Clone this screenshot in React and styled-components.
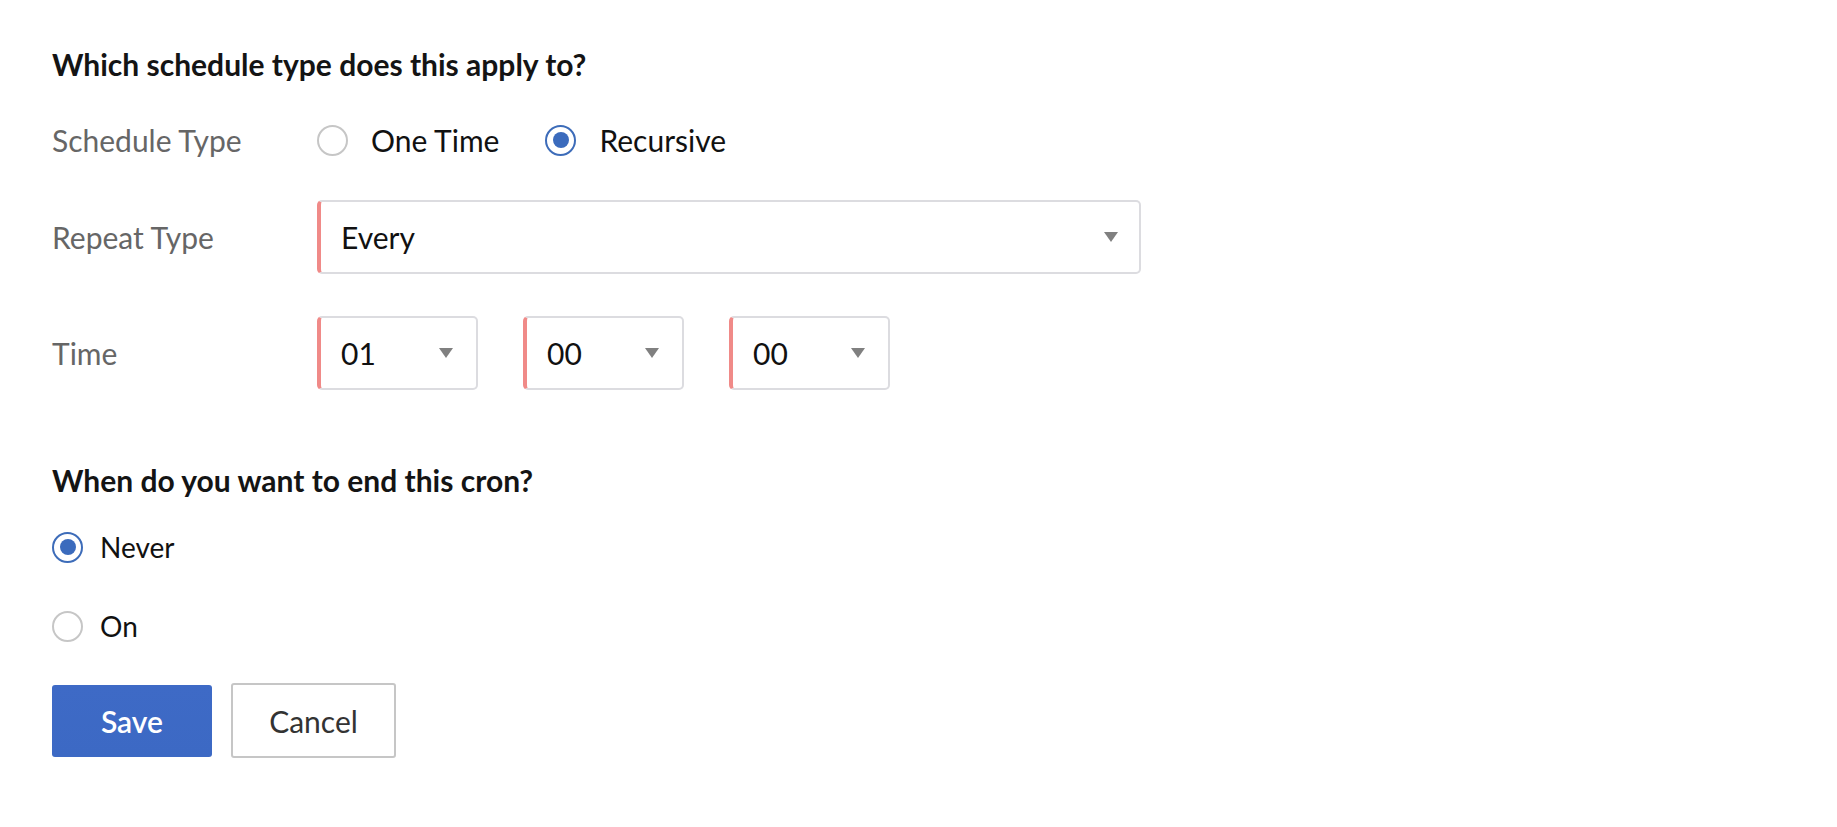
import { useState } from "react";
import styled, { createGlobalStyle } from "styled-components";

const GlobalStyle = createGlobalStyle`
  body {
    margin: 0;
    background: #fff;
    font-family: Lato, "Open Sans", sans-serif;
  }
`;

const Form = styled("div")`
  padding: 47px 52px 60px;
  color: #111;
`;

const Heading = styled("h2")`
  margin: ${(p) => p.$top || 0}px 0 0;
  font-size: 30px;
  line-height: 34px;
  font-weight: 700;
  color: #141414;
`;

const Row = styled("div")`
  display: grid;
  grid-template-columns: 265px auto;
  align-items: center;
  min-height: 40px;
  margin-top: ${(p) => p.$top}px;
`;

const Label = styled("span")`
  font-size: 30px;
  color: #666;
`;

const Options = styled("div")`
  display: flex;
  align-items: center;
  gap: ${(p) => p.$gap || 46}px;
`;

const Option = styled("label")`
  display: flex;
  align-items: center;
  gap: ${(p) => p.$gap || 23}px;
  font-size: ${(p) => p.$size || 30}px;
  color: #111;
  cursor: pointer;
  min-height: 40px;
  margin-top: ${(p) => p.$top || 0}px;
`;

const Circle = styled("span")`
  box-sizing: border-box;
  width: 31px;
  height: 31px;
  border-radius: 50%;
  border: 2px solid ${(p) => (p.$on ? "#3d6cb9" : "#c6c6c6")};
  display: flex;
  align-items: center;
  justify-content: center;
  flex-shrink: 0;

  &::after {
    content: "";
    width: 16px;
    height: 16px;
    border-radius: 50%;
    background: #3b6bbd;
    display: ${(p) => (p.$on ? "block" : "none")};
  }
`;

const Select = styled("div")`
  box-sizing: border-box;
  width: ${(p) => p.$width}px;
  height: 74px;
  border: 2px solid #dcdce0;
  border-left: 4px solid #f08a88;
  border-radius: 5px;
  display: flex;
  align-items: center;
  justify-content: space-between;
  padding: 0 ${(p) => p.$right}px 0 20px;
  font-size: 30px;
  color: #111;
  background: #fff;
`;

const Caret = styled("span")`
  width: 0;
  height: 0;
  border-left: 7.5px solid transparent;
  border-right: 7.5px solid transparent;
  border-top: 10px solid #808080;
`;

const TimeGroup = styled("div")`
  display: flex;
  gap: 45px;
`;

const Actions = styled("div")`
  display: flex;
  align-items: center;
  gap: 19px;
  margin-top: 37px;
`;

const Button = styled("button")`
  box-sizing: border-box;
  font-family: Lato, "Open Sans", sans-serif;
  font-size: 30px;
  border-radius: 3px;
  cursor: pointer;
  width: ${(p) => (p.$primary ? 160 : 165)}px;
  height: ${(p) => (p.$primary ? 72 : 75)}px;
  border: ${(p) => (p.$primary ? "none" : "2px solid #c6c6c6")};
  background: ${(p) => (p.$primary ? "linear-gradient(#3e6ac6, #3c69c4)" : "#fff")};
  color: ${(p) => (p.$primary ? "#fff" : "#333")};
  font-weight: ${(p) => (p.$primary ? 600 : 400)};
`;

const Radio = ({ on, children, gap, top, size, onClick }) => (
  <Option $gap={gap} $top={top} $size={size} onClick={onClick}>
    <Circle $on={on} />
    {children}
  </Option>
);

const App = () => {
  const [type, setType] = useState("recursive");
  const [end, setEnd] = useState("never");

  return (
    <Form>
      <GlobalStyle />
      <Heading>Which schedule type does this apply to?</Heading>

      <Row $top={39}>
        <Label>Schedule Type</Label>
        <Options>
          <Radio on={type === "one"} onClick={() => setType("one")}>
            One Time
          </Radio>
          <Radio on={type === "recursive"} onClick={() => setType("recursive")}>
            Recursive
          </Radio>
        </Options>
      </Row>

      <Row $top={40}>
        <Label>Repeat Type</Label>
        <Select $width={824} $right={21}>
          Every
          <Caret />
        </Select>
      </Row>

      <Row $top={42}>
        <Label>Time</Label>
        <TimeGroup>
          {["01", "00", "00"].map((v, i) => (
            <Select key={i} $width={161} $right={23}>
              {v}
              <Caret />
            </Select>
          ))}
        </TimeGroup>
      </Row>

      <Heading $top={73}>When do you want to end this cron?</Heading>

      <Radio gap={17} size={28} top={30} on={end === "never"} onClick={() => setEnd("never")}>
        Never
      </Radio>
      <Radio gap={17} size={28} top={39} on={end === "on"} onClick={() => setEnd("on")}>
        On
      </Radio>

      <Actions>
        <Button $primary>Save</Button>
        <Button>Cancel</Button>
      </Actions>
    </Form>
  );
};

export default App;
